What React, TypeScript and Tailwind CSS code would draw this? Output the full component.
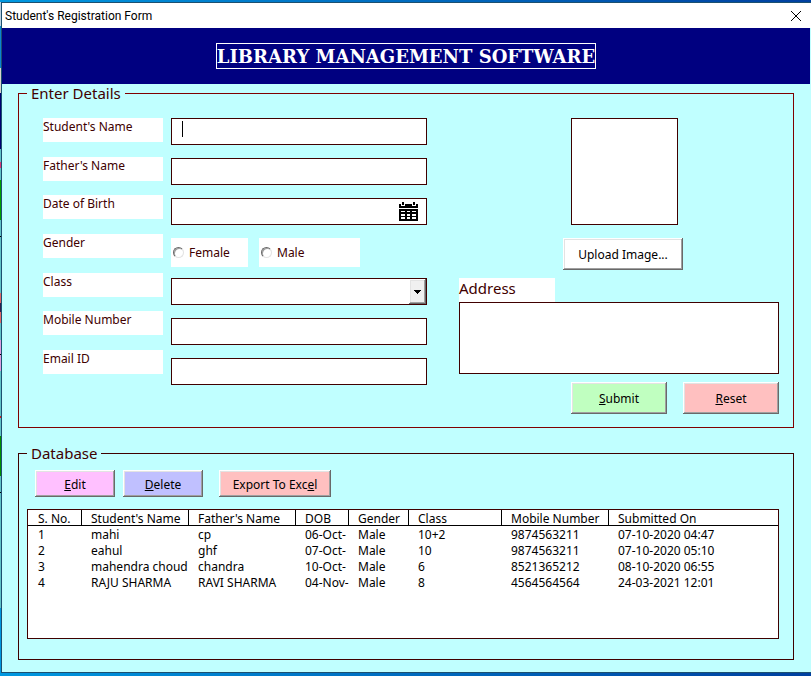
import type { ReactNode } from "react";

const raised =
  "shadow-[inset_-1px_-1px_#696969,inset_1px_1px_#fff,inset_-2px_-2px_#a0a0a0,inset_2px_2px_#e3e3e3]";

const textBox = "block w-full h-[27px] px-2 bg-white border border-[#400000] outline-none";

const labels = [
  { id: "student", text: "Student's Name" },
  { id: "father", text: "Father's Name" },
  { id: "dob", text: "Date of Birth" },
  { id: "female", text: "Gender" },
  { id: "class", text: "Class" },
  { id: "mobile", text: "Mobile Number" },
  { id: "email", text: "Email ID" },
];

const columns = [
  { title: "S. No.", width: "w-[54px]" },
  { title: "Student's Name", width: "w-[107px]" },
  { title: "Father's Name", width: "w-[107px]" },
  { title: "DOB", width: "w-[53px]" },
  { title: "Gender", width: "w-[60px]" },
  { title: "Class", width: "w-[93px]" },
  { title: "Mobile Number", width: "w-[107px]" },
  { title: "Submitted On", width: "" },
];

const rows = [
  ["1", "mahi", "cp", "06-Oct-", "Male", "10+2", "9874563211", "07-10-2020 04:47"],
  ["2", "eahul", "ghf", "07-Oct-", "Male", "10", "9874563211", "07-10-2020 05:10"],
  ["3", "mahendra choud", "chandra", "10-Oct-", "Male", "6", "8521365212", "08-10-2020 06:55"],
  ["4", "RAJU SHARMA", "RAVI SHARMA", "04-Nov-", "Male", "8", "4564564564", "24-03-2021 12:01"],
];

// sliver of the sheet behind the window
const strip = [
  "h-6 bg-[#b9cfe0]",
  "h-[42px] bg-[#0a84d0]",
  "h-[25px] bg-[#d8d4cc]",
  "h-[56px] bg-[#000070]",
  "h-[13px] bg-[#60c4c8]",
  "h-[6px] bg-[#d83878]",
  "h-[12px] bg-[#60c4c8]",
  "h-[40px] bg-[#00a000]",
  "h-[16px] bg-[#60c4c8]",
  "h-px bg-black",
  "h-[56px] bg-[#60c4c8]",
  "h-[10px] bg-[#e06868]",
  "h-[9px] bg-[#302050]",
  "h-[11px] bg-[#e06868]",
  "h-[17px] bg-[#60c4c8]",
  "h-[14px] bg-[#dc9ce0]",
  "h-px bg-black",
  "h-[16px] bg-[#dc9ce0]",
  "h-[45px] bg-[#60c4c8]",
  "h-[2px] bg-[#d02020]",
  "h-[18px] bg-[#60c4c8]",
  "h-[40px] bg-[#009000]",
  "h-[16px] bg-[#60c4c8]",
  "h-px bg-black",
  "h-[115px] bg-[#60c4c8]",
];

function CommandButton({ className, children }: { className: string; children: ReactNode }) {
  return (
    <button type="button" className={`${raised} pt-0.5 text-center text-black ${className}`}>
      {children}
    </button>
  );
}

function CalendarIcon() {
  return (
    <svg width="19" height="19" viewBox="0 0 19 19" shapeRendering="crispEdges" aria-hidden="true">
      <path
        fill="#000"
        fillRule="evenodd"
        d="M0 2h2v2h4v-2h7v2h4v-2h2v4h-19zM3 0h2v3h-2zM14 0h2v3h-2zM0 7h19v12h-19zM2 9v1h4v-1zM8 9v1h3v-1zM13 9v1h4v-1zM2 12v2h4v-2zM8 12v2h3v-2zM13 12v2h4v-2zM2 15v2h4v-2zM8 15v2h3v-2zM13 15v2h4v-2z"
      />
    </svg>
  );
}

function GenderOption({ id, text, className }: { id: string; text: string; className: string }) {
  return (
    <label htmlFor={id} className={`flex h-[29px] items-center gap-[5px] bg-white pl-0.5 ${className}`}>
      <input
        id={id}
        type="radio"
        name="gender"
        className="size-[11px] appearance-none rounded-full border border-t-[#696969] border-l-[#696969] border-r-[#e3e3e3] border-b-[#e3e3e3] bg-white shadow-[inset_1px_1px_#a0a0a0]"
      />
      {text}
    </label>
  );
}

function DetailsForm() {
  return (
    <fieldset className="min-w-0 border border-[#800000] pl-6 pr-3.5 pb-[13px] text-[#400000]">
      <legend className="-ml-4 px-1 text-[15px] leading-[19px]">Enter Details</legend>
      <div className="flex gap-2 pt-[15px]">
        <div className="flex h-64 w-[120px] flex-none flex-col justify-between">
          {labels.map((label) => (
            <label key={label.id} htmlFor={label.id} className="h-6 bg-white leading-[18px]">
              {label.text}
            </label>
          ))}
        </div>

        <div className="grid min-w-0 flex-[4] auto-rows-[40px] content-start items-start">
          <div className="relative">
            <input id="student" type="text" className={textBox} />
            <span className="absolute left-[11px] top-[3px] h-4 w-px bg-black" />
          </div>
          <input id="father" type="text" className={textBox} />
          <div className="relative">
            <input id="dob" type="text" className={textBox} />
            <button type="button" aria-label="Pick a date" className="absolute right-[9px] top-1">
              <CalendarIcon />
            </button>
          </div>
          <div className="flex gap-[11px]">
            <GenderOption id="female" text="Female" className="w-[77px]" />
            <GenderOption id="male" text="Male" className="w-[101px]" />
          </div>
          <div className="relative">
            <select id="class" className={`${textBox} appearance-none`} />
            <span
              className={`${raised} pointer-events-none absolute right-px top-px flex h-[25px] w-[17px] items-center justify-center bg-[#f0f0f0]`}
            >
              <svg width="7" height="4" viewBox="0 0 7 4" shapeRendering="crispEdges" aria-hidden="true">
                <path d="M0 0h7v1h-1v1h-1v1h-1v1h-1v-1h-1v-1h-1v-1h-1z" fill="#000" />
              </svg>
            </span>
          </div>
          <input id="mobile" type="text" className={textBox} />
          <input id="email" type="text" className={textBox} />
        </div>

        <div className="ml-6 flex min-w-0 flex-[5] flex-col">
          <div className="mr-[101px] size-[107px] self-end border border-[#400000] bg-white" />
          <CommandButton className="mt-[13px] mr-24 h-8 w-[120px] self-end bg-white">Upload Image...</CommandButton>
          <label htmlFor="address" className="mt-2 h-6 w-24 bg-white text-[15px] leading-5">
            Address
          </label>
          <textarea id="address" className="block h-[72px] w-full resize-none border border-[#400000] bg-white outline-none" />
          <div className="mt-2 flex justify-end gap-4">
            <CommandButton className="h-8 w-24 bg-[#c0ffc0]">
              <u>S</u>ubmit
            </CommandButton>
            <CommandButton className="h-8 w-24 bg-[#ffc0c0]">
              <u>R</u>eset
            </CommandButton>
          </div>
        </div>
      </div>
    </fieldset>
  );
}

function Database() {
  return (
    <fieldset className="min-w-0 border border-[#400000] pl-2 pr-3.5 pb-5 text-black">
      <legend className="px-1 text-[15px] leading-[19px] text-[#400000]">Database</legend>
      <div className="flex gap-2 pt-[7px] pl-2">
        <CommandButton className="h-[27px] w-20 bg-[#ffc0ff]">
          <u>E</u>dit
        </CommandButton>
        <CommandButton className="h-[27px] w-20 bg-[#c0c0ff]">
          <u>D</u>elete
        </CommandButton>
        <CommandButton className="ml-2 h-[27px] w-28 bg-[#ffc0c0]">
          Export To Exc<u>e</u>l
        </CommandButton>
      </div>
      <div className="mt-3 h-[130px] overflow-hidden border border-[#400000] bg-white">
        <table className="w-full table-fixed border-separate border-spacing-0 text-left">
          <thead>
            <tr>
              {columns.map((column) => (
                <th
                  key={column.title}
                  className={`${column.width} h-4 overflow-hidden border-r border-b border-black p-0 pl-[9px] font-normal whitespace-nowrap first:pl-2.5 last:border-r-0`}
                >
                  <div className="h-[15px] leading-[17px]">{column.title}</div>
                </th>
              ))}
            </tr>
          </thead>
          <tbody>
            {rows.map((row) => (
              <tr key={row[0]}>
                {row.map((cell, i) => (
                  <td key={i} className="overflow-hidden p-0 pl-[9px] whitespace-nowrap first:pl-2.5">
                    <div className="h-4 leading-[18px]">{cell}</div>
                  </td>
                ))}
              </tr>
            ))}
          </tbody>
        </table>
      </div>
    </fieldset>
  );
}

export default function App() {
  return (
    <div className="flex min-h-screen bg-linear-to-r from-[#0098e0] to-[#0040a0] pt-0.5 pb-[3px] font-['Noto_Sans',sans-serif] text-xs">
      <div className="w-px flex-none">
        {strip.map((piece, i) => (
          <div key={i} className={piece} />
        ))}
      </div>
      <div className="min-w-0 flex-1 border-t border-b border-l border-[#1c5070] bg-[#c0ffff]">
        <div className="flex h-[25px] items-center justify-between bg-white pr-2.5 pl-[3px] font-[Roboto,sans-serif] text-black">
          <span>Student's Registration Form</span>
          <button type="button" aria-label="Close">
            <svg width="10" height="10" viewBox="0 0 10 10" aria-hidden="true">
              <path d="M0 0l10 10M10 0l-10 10" stroke="#000" strokeWidth="1" />
            </svg>
          </button>
        </div>
        <header className="mr-px flex h-14 items-center justify-center bg-[#000080]">
          <h1 className="border border-white pt-0.5 font-['DejaVu_Serif',serif] text-lg leading-[22px] font-bold text-white">
            LIBRARY MANAGEMENT SOFTWARE
          </h1>
        </header>
        <main className="flex flex-col gap-4 pr-[17px] pb-3 pl-4">
          <DetailsForm />
          <Database />
        </main>
      </div>
    </div>
  );
}
